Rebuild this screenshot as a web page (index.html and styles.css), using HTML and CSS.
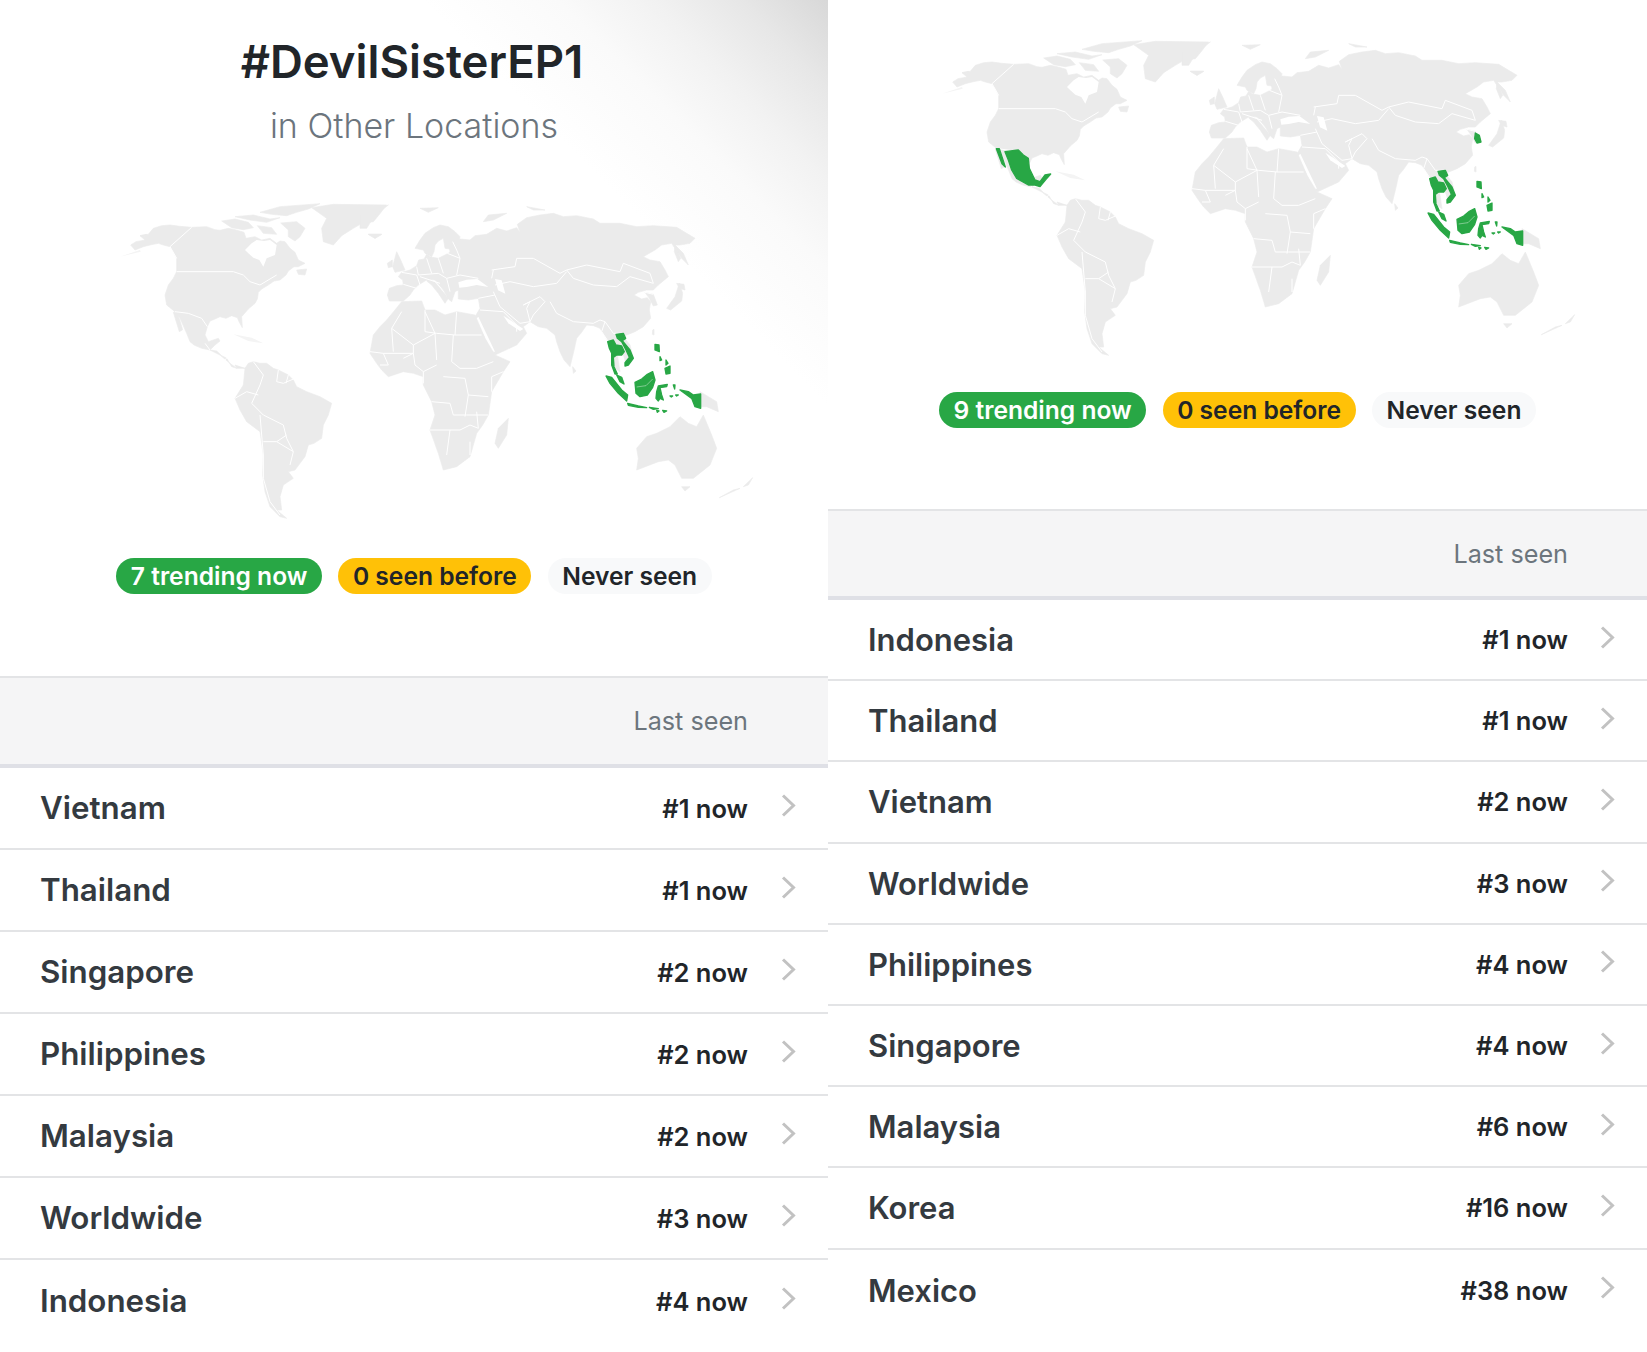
FILE: index.html
```html
<!DOCTYPE html>
<html>
  <head>
    <title>#DevilSisterEP1</title>
    <link rel="stylesheet" href="styles.css">
  </head>
  <body>
    <svg class="defs" width="0" height="0">
      <defs>
        <symbol id="chev" viewBox="0 0 15 23"><polyline points="2,1.5 12.5,11.5 2,21.5"/></symbol>

        <g id="world">
          <g transform="translate(360 0)">
            <!-- americas -->
            <path class="land" d="M32 150L48 140L75 135L60 122L85 118L100 100L125 92L150 90L180 94L215 97L260 95L285 104L300 106L325 100L345 104L372 112L378 130L405 125L425 135L450 130L470 145L480 138L495 140L510 160L525 172L535 195L555 205L535 215L522 215L505 228L498 240L480 255L462 258L445 270L425 282L415 292L412 312L405 325L385 342L365 365L367 398L358 382L352 368L335 362L318 370L300 365L285 372L270 378L262 395L255 420L265 440L295 430L300 438L285 450L270 465L290 468L305 482L320 490L335 515L350 520L345 510L375 520L385 505L400 500L420 505L440 505L460 520L475 525L505 540L520 555L530 575L560 590L600 605L635 625L625 660L610 690L605 730L582 745L565 750L555 785L540 805L525 825L505 830L520 850L490 870L480 905L485 945L470 945L500 970L480 965L450 935L435 890L428 840L430 780L420 710L380 680L360 645L345 610L370 570L375 520L350 520L330 505L300 480L270 465L245 460L222 450L210 440L200 415L180 370L165 350L140 330L135 300L145 270L160 250L170 230L170 190L160 170L150 155L130 150L115 145L90 150L70 155L45 165Z"/>
            <path class="hole" d="M375 165L395 145L410 135L432 138L450 135L470 150L465 180L440 190L430 215L418 195L400 188L385 175Z"/>
            <path class="land" d="M160 352L172 352L188 404L178 410Z"/>
            <path class="faint" d="M0 185L60 165L62 170Z"/>
            <path class="land" d="M60 122L80 118L72 125Z"/>
            <path class="land" d="M530 225L560 222L555 240L535 238Z"/>
            <path class="land" d="M305 78L345 72L385 82L400 98L370 104L335 98Z"/>
            <path class="land" d="M412 92L455 98L470 118L430 115Z"/>
            <path class="land" d="M482 84L530 80L555 100L540 125L525 138L505 125L505 105Z"/>
            <path class="land" d="M345 65L400 60L450 72L480 68L440 82L390 75Z"/>
            <path class="land" d="M420 52L480 35L600 26L565 42L530 52L500 62L455 58Z"/>
            <path class="land" d="M575 38L640 28L800 30L775 62L760 80L725 85L700 100L665 122L640 150L610 140L605 100L620 70Z"/>
            <path class="land" d="M745 118L785 118L765 130Z"/>
            <path class="faint" d="M340 418L395 428L430 445L385 438Z"/>
            <path class="line" d="M215 97L150 155L170 190M170 230L340 230L370 240L390 260L420 270L470 240M165 350L205 355L245 370L262 395M270 465L255 445M285 460L300 470M320 490L310 498M400 500L430 540L420 570L395 625L430 660L490 690L500 730L520 770L510 810M475 525L470 560L490 565L525 550M505 540L498 565M345 610L380 590L415 600M420 660L430 780L430 850L450 920L480 960M430 740L470 740L500 720M470 740L520 770"/>
          </g>
          <g transform="translate(1080 0)">
            <!-- old world -->
            <path class="land" d="M88 318L82 300L88 280L110 272L130 270L128 255L115 245L125 232L150 225L170 212L176 195L192 192L200 178L212 186L235 190L255 180L270 172L268 155L278 140L300 132L330 135L345 122L380 118L410 100L440 108L470 98L480 112L472 88L500 68L540 60L580 55L610 65L650 62L700 72L720 85L780 85L830 95L880 92L950 97L1005 130L990 145L960 150L945 150L970 175L985 210L965 190L948 165L935 145L905 150L885 165L850 185L870 195L900 200L915 225L925 245L895 270L880 285L860 285L835 292L822 300L845 312L862 308L872 320L868 345L872 370L850 395L825 410L800 420L790 425L810 450L820 490L800 510L790 480L770 465L780 530L765 520L755 470L745 440L720 400L700 392L680 390L665 412L650 430L640 475L630 515L612 495L600 470L590 440L585 420L560 400L535 395L510 380L490 395L500 415L470 450L405 480L385 450L365 410L345 365L360 340L355 310L325 315L295 312L295 285L285 290L275 320L265 312L250 285L225 255L205 252L175 270L160 285L150 300L130 318Z"/>
            <path class="land" d="M205 250L225 262L265 310L255 325L235 295L215 270L200 258Z"/>
            <path class="land" d="M165 160L180 135L195 115L220 98L240 90L265 95L285 110L300 125L295 145L290 165L270 162L255 160L250 130L235 138L225 150L222 170L215 185L195 175L190 165Z"/>
            <path class="land" d="M98 215L110 170L122 195L135 225L105 232Z"/>
            <path class="land" d="M82 205L97 195L97 215L85 218Z"/>
            <path class="land" d="M180 40L235 38L205 52Z"/>
            <path class="land" d="M370 80L385 60L440 55L400 75Z"/>
            <path class="land" d="M500 35L555 45L520 45Z"/>
            <path class="land" d="M0 60L85 30L45 60L20 100L0 100Z"/>
            <path class="land" d="M25 118L65 118L45 130Z"/>
            <path class="hole" d="M295 262L320 254L352 252L385 276L350 270L320 276L298 278Z"/>
            <path class="hole" d="M405 252L425 256L436 296L414 286Z"/>
            <path class="hole" d="M430 362L450 375L490 402L480 408L445 385Z"/>
            <path class="hole" d="M355 365L405 470L395 470L348 372Z"/>
            <path class="land" d="M125 320L185 318L195 345L225 345L255 360L290 350L345 360L375 430L405 480L450 500L430 530L395 590L385 660L368 690L350 715L330 785L290 815L250 825L235 775L210 705L225 660L215 620L190 570L190 545L160 535L130 530L85 545L65 525L50 505L30 475L40 420L60 395L80 375L105 345Z"/>
            <path class="land" d="M445 670L440 720L415 760L405 745L415 700Z"/>
            <path class="land" d="M830 760L860 725L890 715L930 695L960 665L985 685L1010 695L1030 660L1055 720L1070 760L1050 810L1025 830L1000 850L965 850L945 810L925 795L895 800L830 825L835 790Z"/>
            <path class="land" d="M965 875L990 875L975 888Z"/>
            <path class="land" d="M1178 848L1165 870L1150 875Z"/>
            <path class="land" d="M1140 880L1078 908L1120 885Z"/>
            <path class="land" d="M1020 590L1070 620L1075 650L1040 635L1020 635Z"/>
            <path class="land" d="M920 340L945 305L958 265L968 295L965 318L932 345Z"/>
            <path class="land" d="M950 265L972 268L975 285L958 280Z"/>
            <path class="land" d="M945 150L962 190L955 200L943 170Z"/>
            <path class="land" d="M878 405L882 403L882 420L877 418Z"/>
            <path class="land" d="M638 515L648 528L640 535Z"/>
            <path class="land" d="M855 292L880 298L892 330L880 333L868 310Z"/>
            <path class="line" d="M125 350L95 400L160 450L225 415L195 350M195 345L195 410L230 415L285 420L290 350M285 420L365 420M225 415L230 495M160 450L160 475L70 475L30 470M95 400L100 470M280 420L275 500L300 520L350 520L400 500M70 475L85 510L60 510M130 490L160 475L165 510L190 530M230 510L190 530L190 565M250 545L315 550L325 600L385 605M395 590L395 545L430 530M215 620L270 625L280 660L320 660L385 660M210 705L300 705L330 690L355 700M270 705L260 780M330 740L330 780M350 650L355 700M325 600L315 665"/>
            <path class="line" d="M130 268L170 280M125 232L170 240L180 270M170 215L175 240L235 235L260 250L300 240M200 190L215 235M235 190L250 235M262 175L300 190L290 240M180 245L240 265M260 250L270 290M300 240L355 250M278 140L290 165L300 190"/>
            <path class="line" d="M395 225L465 215L470 190L520 190L600 235L620 225L680 210L780 230L790 205L870 235L880 265L810 245L770 275L700 270L640 250L620 225M405 270L450 260L520 275L590 265L620 230M400 290L420 335L480 385L510 380L500 340L510 320L490 330L540 305L555 320L520 360L510 380M570 320L590 355L640 380L700 385L720 375L735 380L725 410L745 440M735 380L760 415L785 415M360 345L430 350L470 390L470 410M355 310L405 300M395 250L400 225M855 292L880 298"/>
          </g>
        </g>

        <g id="sea" class="hit" transform="translate(1080 0)">
          <path d="M743 440L760 435L768 450L785 453L793 470L785 480L770 480L760 487L762 515L772 537L765 537L755 510L755 475L748 460Z"/>
          <path d="M768 418L790 415L797 430L787 437L810 465L820 490L805 510L795 513L795 503L808 487L798 465L785 440L772 430Z"/>
          <path d="M770 540L785 547L792 567L780 560Z"/>
          <path d="M738 543L755 547L785 585L803 600L800 618L775 595L750 565Z"/>
          <path d="M803 625L835 633L860 638L835 637L805 631Z"/>
          <path d="M868 637L895 641L880 643Z"/>
          <path d="M890 646L897 648L892 652ZM908 646L920 648L912 652Z"/>
          <path d="M825 562L845 552L862 538L878 530L885 555L878 577L862 600L840 605L828 595Z"/>
          <path d="M895 573L922 568L920 575L900 578L905 600L910 615L900 610L895 618L888 610L890 590Z"/>
          <path d="M885 448L897 450L898 470L885 465Z"/>
          <path d="M915 520L930 513L930 535L918 537Z"/>
          <path d="M900 485L905 495L900 497ZM918 495L924 505L918 510Z"/>
          <path d="M960 585L985 590L1000 600L1022 597L1022 640L1005 635L995 610Z"/>
          <path d="M940 570L945 570L944 582ZM930 603L938 603L934 606ZM947 600L955 600L950 603Z"/>
          <path class="cut" d="M830 576L858 572L878 552"/>
        </g>
      </defs>
    </svg>

    <div class="page">
      <section class="panel panel-a">
        <div class="head head-a">
          <h1 class="title">#DevilSisterEP1</h1>
          <p class="sub">in Other Locations</p>
          <svg class="map" viewBox="0 0 2484 990"><use href="#world"/><use href="#sea"/></svg>
          <div class="pills">
            <span class="pill green">7 trending now</span>
            <span class="pill yellow">0 seen before</span>
            <span class="pill grey">Never seen</span>
          </div>
        </div>
        <div class="thead"><span>Last seen</span></div>
        <ul class="rows">
          <li class="row"><span class="name">Vietnam</span><span class="val">#1 now</span><svg class="chev"><use href="#chev"/></svg></li>
          <li class="row"><span class="name">Thailand</span><span class="val">#1 now</span><svg class="chev"><use href="#chev"/></svg></li>
          <li class="row"><span class="name">Singapore</span><span class="val">#2 now</span><svg class="chev"><use href="#chev"/></svg></li>
          <li class="row"><span class="name">Philippines</span><span class="val">#2 now</span><svg class="chev"><use href="#chev"/></svg></li>
          <li class="row"><span class="name">Malaysia</span><span class="val">#2 now</span><svg class="chev"><use href="#chev"/></svg></li>
          <li class="row"><span class="name">Worldwide</span><span class="val">#3 now</span><svg class="chev"><use href="#chev"/></svg></li>
          <li class="row"><span class="name">Indonesia</span><span class="val">#4 now</span><svg class="chev"><use href="#chev"/></svg></li>
        </ul>
      </section>

      <section class="panel panel-b">
        <div class="head head-b">
          <svg class="map" viewBox="0 0 2484 990">
            <use href="#world"/><use href="#sea"/>
            <g class="hit">
              <path transform="translate(360 0)" d="M189 359L229 354L244 369L259 379L262 409L279 444L294 449L309 429L326 426L312 442L294 464L279 459L259 459L224 439L209 414L199 384ZM163 350L172 350L190 405L180 395Z"/>
              <path transform="translate(1080 0)" d="M880 303L892 310L897 330L885 333L878 320Z"/>
            </g>
          </svg>
          <div class="pills">
            <span class="pill green">9 trending now</span>
            <span class="pill yellow">0 seen before</span>
            <span class="pill grey">Never seen</span>
          </div>
        </div>
        <div class="thead"><span>Last seen</span></div>
        <ul class="rows">
          <li class="row"><span class="name">Indonesia</span><span class="val">#1 now</span><svg class="chev"><use href="#chev"/></svg></li>
          <li class="row"><span class="name">Thailand</span><span class="val">#1 now</span><svg class="chev"><use href="#chev"/></svg></li>
          <li class="row"><span class="name">Vietnam</span><span class="val">#2 now</span><svg class="chev"><use href="#chev"/></svg></li>
          <li class="row"><span class="name">Worldwide</span><span class="val">#3 now</span><svg class="chev"><use href="#chev"/></svg></li>
          <li class="row"><span class="name">Philippines</span><span class="val">#4 now</span><svg class="chev"><use href="#chev"/></svg></li>
          <li class="row"><span class="name">Singapore</span><span class="val">#4 now</span><svg class="chev"><use href="#chev"/></svg></li>
          <li class="row"><span class="name">Malaysia</span><span class="val">#6 now</span><svg class="chev"><use href="#chev"/></svg></li>
          <li class="row"><span class="name">Korea</span><span class="val">#16 now</span><svg class="chev"><use href="#chev"/></svg></li>
          <li class="row"><span class="name">Mexico</span><span class="val">#38 now</span><svg class="chev"><use href="#chev"/></svg></li>
        </ul>
      </section>
    </div>
  </body>
</html>
```
FILE: styles.css
```css
html, body {
  margin: 0;
  padding: 0;
  background: #fff;
}

body {
  font-family: Inter, "Liberation Sans", sans-serif;
  color: #212529;
  height: 1352px;
  overflow: hidden;
}

.defs {
  display: block;
  position: absolute;
}

.page {
  display: flex;
  align-items: flex-start;
}

.panel-a { width: 828px; flex: none; }
.panel-b { width: 819px; flex: none; }

.head {
  display: flex;
  flex-direction: column;
  align-items: center;
}

.head-a {
  height: 676px;
  box-sizing: border-box;
  padding-top: 35px;
  background: linear-gradient(225deg, #d8d8d8 0, #e7e7e7 6%, #f2f2f2 12%, #fafafa 18%, #fff 27%);
}

.head-b {
  height: 509px;
  box-sizing: border-box;
  padding-top: 32px;
}

.title {
  margin: 0 4px 0 0;
  font-size: 45.5px;
  line-height: 54px;
  font-weight: 600;
  color: #212529;
}

.sub {
  margin: 17px 0 49px;
  font-size: 34px;
  line-height: 40px;
  font-weight: 300;
  color: #6c757d;
}

.map {
  display: block;
  flex: none;
  width: 828px;
  height: 330px;
}

.head-b .map {
  margin-left: -3px;
}

.land {
  fill: #ebebeb;
  stroke: #ebebeb;
  stroke-width: 2;
  stroke-linejoin: round;
}

.faint { fill: #f4f4f4; }

.hole { fill: #fff; }

.line {
  fill: none;
  stroke: #fff;
  stroke-width: 3;
  stroke-linejoin: round;
}

.hit {
  fill: #28a745;
  stroke: #28a745;
  stroke-width: 4;
  stroke-linejoin: round;
}

.cut {
  fill: none;
  stroke: #d4edda;
  stroke-width: 1.5;
}

.pills {
  display: flex;
  gap: 16.5px;
  margin-top: 33px;
}

.head-b .pills { margin-top: 30px; }

.pill {
  height: 36px;
  line-height: 36px;
  padding: 0 14.5px;
  border-radius: 18px;
  font-size: 24.6px;
  font-weight: 600;
  white-space: nowrap;
}

.green { background: #28a745; color: #fff; }
.yellow { background: #ffc107; color: #212529; }
.grey { background: #f8f9fa; color: #212529; }

.thead {
  height: 92px;
  box-sizing: border-box;
  display: flex;
  align-items: center;
  justify-content: flex-end;
  padding-right: 80px;
  background: #f5f5f6;
  border-top: 2px solid #e3e4e6;
  border-bottom: 4px solid #dfe0e6;
  font-size: 25.2px;
  color: #6c757d;
}

.rows {
  list-style: none;
  margin: 0;
  padding: 0;
}

.row {
  height: 82px;
  box-sizing: border-box;
  display: flex;
  align-items: center;
  padding: 0 32px 0 40px;
  border-bottom: 2px solid #e3e4e6;
}

.panel-b .row { height: 81.2px; }

.panel-b .thead {
  height: 91px;
  padding-right: 79px;
}

.row:last-child { border-bottom: 0; }

.name {
  flex: 1;
  font-size: 31.3px;
  font-weight: 600;
  color: #343a40;
}

.panel-b .name { font-size: 31px; }

.val {
  font-size: 25.5px;
  font-weight: 600;
  color: #212529;
}

.chev {
  width: 15px;
  height: 23px;
  margin: -5px 0 0 33px;
  fill: none;
  stroke: #c2c2c2;
  stroke-width: 3;
}

.panel-b .chev { margin-left: 32px; }
```
